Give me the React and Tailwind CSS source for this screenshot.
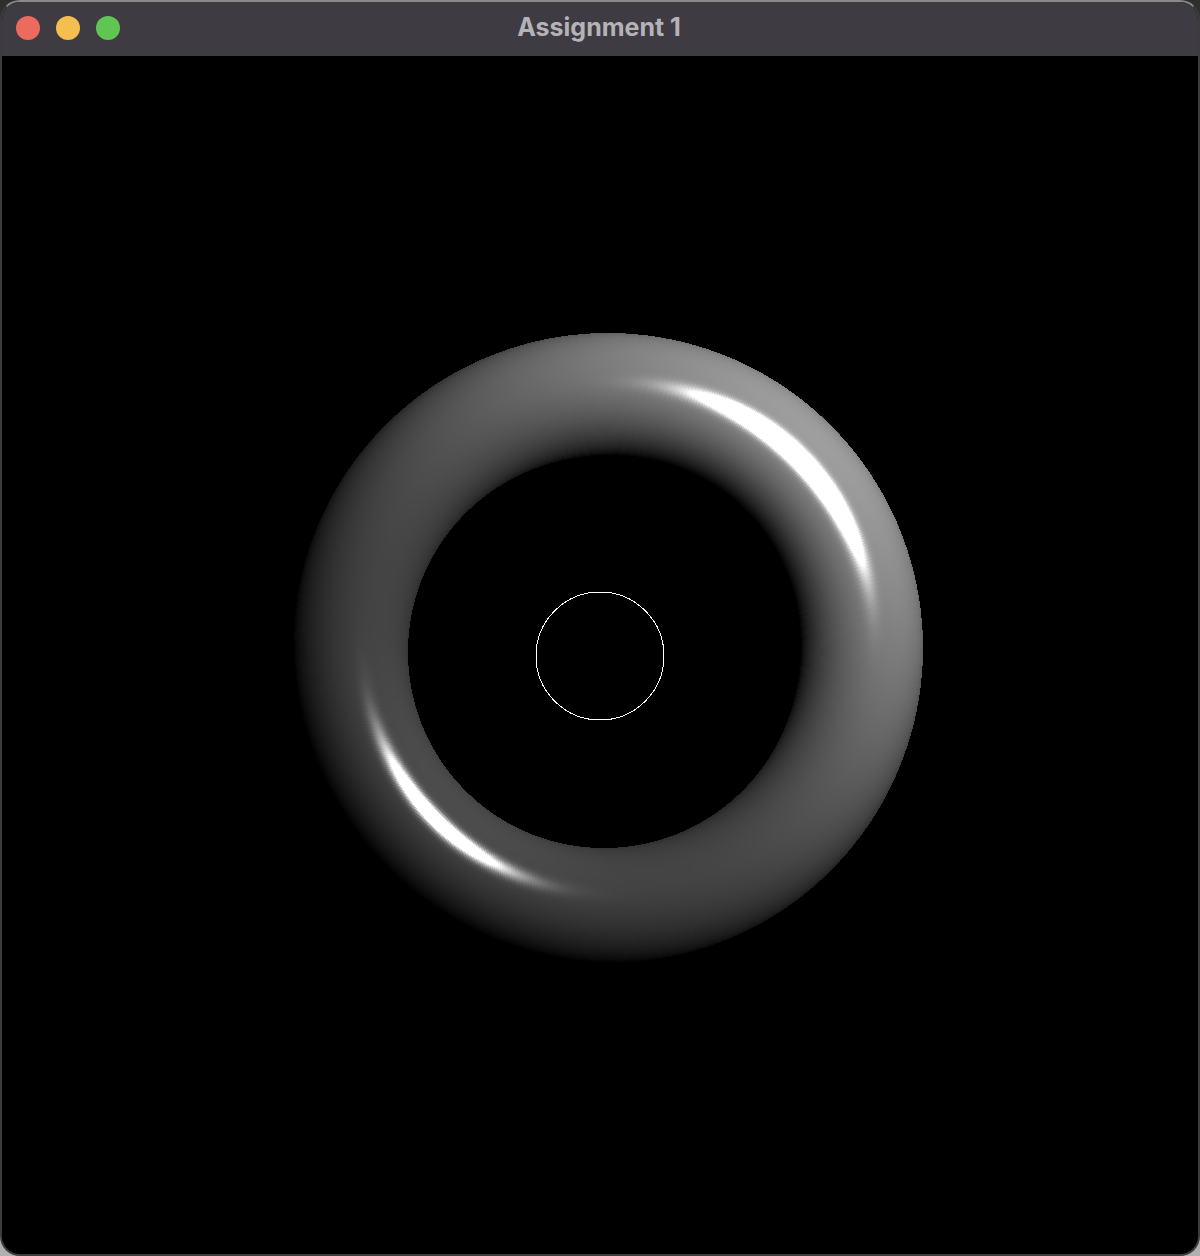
import { useMemo } from 'react';

// Shaded ring: a torus lit from the upper right, bucketed into one path per grey level
const INNER = 196;
const OUTER = 315;
const TUBE_R = (OUTER + INNER) / 2;
const TUBE_A = (OUTER - INNER) / 2;
const LIGHT = [0.5, 0.5, 0.707];
const WRAP = 0.4;
const HALF = [0.19, 0.19, 0.963];

function shade(theta, cosPhi) {
  const sinPhi = Math.sqrt(Math.max(0, 1 - cosPhi * cosPhi));
  const n = [cosPhi * Math.cos(theta), cosPhi * Math.sin(theta), sinPhi];
  const ndotl = n[0] * LIGHT[0] + n[1] * LIGHT[1] + n[2] * LIGHT[2];
  const diff = Math.max(0, (ndotl + WRAP) / (1 + WRAP));
  const c = Math.cos(theta - Math.PI / 4);
  const gain = 0.3 + 0.32 * Math.pow(Math.max(0, (c + 0.7) / 1.7), 1.5);
  const nh = n[0] * HALF[0] + n[1] * HALF[1] + n[2] * HALF[2];
  // the upper right streak is fuller than the lower left one
  const specGain = c > 0 ? 3.2 : 1.8;
  const spec = Math.pow(Math.max(0, nh), 128) * specGain * Math.pow(Math.abs(c), 8);
  return Math.min(255, Math.round(255 * (gain * diff + spec)));
}

function buildRing() {
  const buckets = {};
  const thetaSteps = 720;
  const radialSteps = 120;
  const point = (theta, cosPhi) => {
    const r = TUBE_R + TUBE_A * cosPhi;
    const cx = 606 + 2 * cosPhi;
    const cy = 594 - 2 * cosPhi;
    return `${(cx + r * Math.cos(theta)).toFixed(1)} ${(cy - r * Math.sin(theta)).toFixed(1)}`;
  };
  for (let i = 0; i < thetaSteps; i++) {
    const t0 = (i / thetaSteps) * Math.PI * 2;
    const t1 = ((i + 1) / thetaSteps) * Math.PI * 2;
    for (let j = 0; j < radialSteps; j++) {
      const c0 = -1 + (2 * j) / radialSteps;
      const c1 = -1 + (2 * (j + 1)) / radialSteps;
      const grey = shade((t0 + t1) / 2, (c0 + c1) / 2);
      if (grey < 1) continue;
      const quad = `M${point(t0, c0)}L${point(t1, c0)}L${point(t1, c1)}L${point(t0, c1)}Z`;
      (buckets[grey] = buckets[grey] || []).push(quad);
    }
  }
  return Object.entries(buckets).map(([grey, quads]) => ({ grey, d: quads.join('') }));
}

function TrafficLight({ className }) {
  return <div className={`w-6 h-6 rounded-full ${className}`} />;
}

export default function App() {
  const ring = useMemo(buildRing, []);

  return (
    <div className="w-[1200px] h-[1256px] bg-linear-to-b from-[#2e2e2e] to-[#b0b0b0]">
      <div className="w-full h-full flex flex-col overflow-hidden rounded-[20px] border-x-2 border-b-2 border-t-2 border-x-[#3c3c3c] border-b-[#3c3c3c] border-t-[#8a8a8a] bg-black">
        {/* Title bar */}
        <div className="h-[54px] shrink-0 grid grid-cols-[1fr_auto_1fr] items-center bg-[#3e3c42] pl-[14px] pb-[2px]">
          <div className="flex gap-4">
            <TrafficLight className="bg-[#ed6a5e]" />
            <TrafficLight className="bg-[#f5bf4f]" />
            <TrafficLight className="bg-[#61c554]" />
          </div>
          <div className="font-['Inter',sans-serif] font-bold text-[25px] text-[#b5b3b8] -translate-x-[8px]">
            Assignment 1
          </div>
          <div />
        </div>

        {/* GL viewport */}
        <div className="flex-1 min-h-0">
          <svg viewBox="2 0 1196 1198" width="1196" height="1198" shapeRendering="crispEdges" className="block">
            {ring.map(({ grey, d }) => (
              <path key={grey} d={d} fill={`rgb(${grey},${grey},${grey})`} />
            ))}
            <circle cx="600" cy="600" r="64" fill="none" stroke="#ffffff" strokeWidth="1" />
          </svg>
        </div>
      </div>
    </div>
  );
}
